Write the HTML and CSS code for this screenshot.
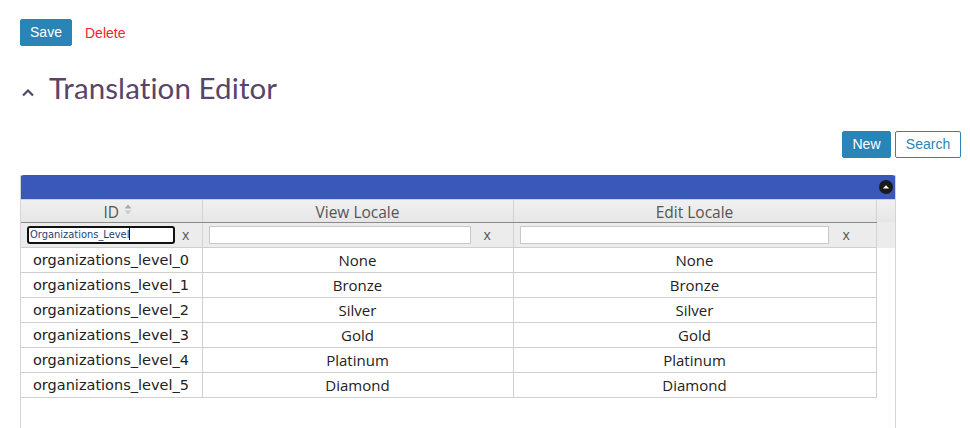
FILE: index.html
```html
<!DOCTYPE html>
<html>
<head>
<meta charset="utf-8">
<link rel="stylesheet" href="styles.css">
</head>
<body>
<div class="toolbar">
  <button class="btn btn-primary">Save</button>
  <a class="link-danger">Delete</a>
</div>
<h1 class="title">
  <svg class="chev" width="14" height="9" viewBox="0 0 14 9"><path d="M2 7.5 L7 2.5 L12 7.5" fill="none" stroke="#57456b" stroke-width="2.2"/></svg>
  <span>Translation Editor</span>
</h1>
<div class="actions">
  <button class="btn btn-primary">New</button>
  <button class="btn btn-outline">Search</button>
</div>
<div class="grid">
  <div class="caption">
    <span class="collapse"><svg width="14" height="14" viewBox="0 0 14 14"><circle cx="7" cy="7" r="7" fill="#1a1a1a"/><path d="M3.8 8.6 L7 5.2 L10.2 8.6 Z" fill="#fff"/></svg></span>
  </div>
  <div class="head">
    <table class="htable">
      <colgroup><col class="c1"><col class="c2"><col class="c3"><col class="cg"></colgroup>
      <tr class="labels">
        <th>ID<svg class="sort" width="8" height="11" viewBox="0 0 8 11"><path d="M0.5 4.5 L4 0.5 L7.5 4.5 Z" fill="#aaa"/><path d="M0.5 6.5 L4 10.5 L7.5 6.5 Z" fill="#ccc"/></svg></th>
        <th>View Locale</th>
        <th>Edit Locale</th>
        <th class="gutter"></th>
      </tr>
      <tr class="filters">
        <td><div class="f"><span class="inp focus">Organizations_Level<i class="caret"></i></span><span class="x">x</span></div></td>
        <td><div class="f f2"><span class="inp"></span><span class="x">x</span></div></td>
        <td><div class="f f3"><span class="inp"></span><span class="x">x</span></div></td>
        <td class="gutter"></td>
      </tr>
    </table>
  </div>
  <div class="body">
    <table class="dtable">
      <colgroup><col class="c1"><col class="c2"><col class="c3"></colgroup>
      <tr><td>organizations_level_0</td><td>None</td><td>None</td></tr>
      <tr><td>organizations_level_1</td><td>Bronze</td><td>Bronze</td></tr>
      <tr><td>organizations_level_2</td><td>Silver</td><td>Silver</td></tr>
      <tr><td>organizations_level_3</td><td>Gold</td><td>Gold</td></tr>
      <tr><td>organizations_level_4</td><td>Platinum</td><td>Platinum</td></tr>
      <tr><td>organizations_level_5</td><td>Diamond</td><td>Diamond</td></tr>
    </table>
  </div>
</div>
</body>
</html>
```
FILE: styles.css
```css
html, body { margin: 0; padding: 0; background: #fff; }
body {
  padding: 19px 9px 0 20px;
  font-family: "Liberation Sans", Arial, sans-serif;
  overflow: hidden;
  height: 409px;
}
.toolbar { display: flex; align-items: center; height: 27px; }
.btn {
  font-family: "Liberation Sans", Arial, sans-serif;
  font-size: 14px;
  height: 27px;
  padding: 0 10px;
  border-radius: 2px;
  cursor: pointer;
  line-height: 25px;
}
.btn-primary { background: #2984b8; border: 1px solid #2984b8; color: #fff; }
.btn-outline { background: #fff; border: 1px solid #2984b8; color: #2984b8; }
.toolbar .btn { width: 52px; padding: 0; }
.link-danger { color: #f5222d; font-size: 14px; margin-left: 13px; }
.title {
  display: flex;
  align-items: center;
  margin: 24px 0 0 0;
  height: 34px;
  font-family: "Lato", sans-serif;
  font-weight: 400;
  font-size: 29.5px;
  letter-spacing: 0.1px;
  color: #57456b;
}
.chev { margin: 10px 14px 0 1px; }
.actions { display: flex; justify-content: flex-end; gap: 4px; margin-top: 27px; }
.actions .btn-primary { width: 49px; padding: 0; }
.actions .btn-outline { width: 66px; padding: 0; }
.grid {
  margin-top: 17px;
  width: 874px;
  height: 254px;
  overflow: hidden;
  border-left: 1px solid #d4d4d4;
  border-right: 1px solid #d4d4d4;
}
.caption {
  height: 24px;
  margin: 0 -1px;
  background: #3a57ba;
  border-radius: 4px 4px 0 0;
  display: flex;
  justify-content: flex-end;
  align-items: center;
  padding-right: 2px;
}
.collapse { display: flex; margin-right: 1px; }
.head { background: #ebebeb; border-top: 1px solid #d0d0d0; }
table { border-collapse: collapse; table-layout: fixed; }
.htable { width: 874px; }
.dtable { width: 855px; }
col.c1 { width: 181px; }
col.c2 { width: 311px; }
col.c3 { width: 363px; }
col.cg { width: 19px; }
.labels th {
  height: 22px;
  padding: 3px 0 0 0;
  box-sizing: border-box;
  font-family: "Open Sans", sans-serif;
  font-weight: 400;
  font-size: 15.5px;
  line-height: 18px;
  color: #555;
  background: linear-gradient(#f0f0f0, #e6e6e6);
  border-right: 1px solid #d2d2d2;
  border-bottom: 1px solid #8a8a8a;
}
.labels th.gutter { border-bottom: none; border-right: none; }
.sort { vertical-align: 3px; margin-left: 5px; margin-right: -13px; }
.filters td {
  height: 24px;
  padding: 0;
  background: #ececec;
  border-right: 1px solid #d2d2d2;
  border-bottom: 1px solid #cfcfcf;
}
.filters td.gutter { border-right: none; border-bottom: none; }
.f { display: flex; align-items: center; padding-left: 6px; }
.inp {
  display: block;
  box-sizing: border-box;
  height: 18px;
  width: 148px;
  background: #fff;
  border: 1px solid #c8c8c8;
  font-family: "DejaVu Sans Condensed", "DejaVu Sans", sans-serif;
  font-size: 11px;
  line-height: 15px;
  color: #1f3f7a;
  padding-left: 1px;
  white-space: nowrap;
  overflow: hidden;
}
.inp.focus { border: 2px solid #111; border-radius: 3px; line-height: 13px; }
.caret { display: inline-block; width: 1px; height: 12px; background: #111; vertical-align: -2px; }
.f2 .inp { width: 262px; }
.f3 .inp { width: 309px; }
.x {
  font-family: "Open Sans", sans-serif;
  font-size: 14px;
  color: #555;
  margin-left: 7px;
}
.f2 .x { margin-left: 13px; }
.f3 .x { margin-left: 14px; }
.dtable td {
  height: 24px;
  padding: 0;
  border: 1px solid #cfcfcf;
  border-top: none;
  font-family: "Open Sans", sans-serif;
  font-size: 15px;
  color: #222;
  text-align: center;
}
.dtable td:first-child {
  text-align: left;
  padding-left: 12px;
  border-left: none;
  font-family: "DejaVu Sans", sans-serif;
  font-size: 14.5px;
}
```
